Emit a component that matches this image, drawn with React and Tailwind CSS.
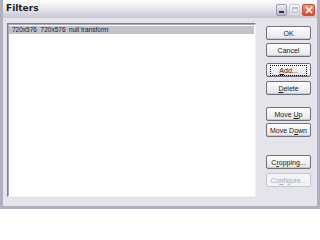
import React from 'react';

const font = { fontFamily: '"Liberation Sans", "DejaVu Sans", sans-serif' };

const Btn = ({ children, disabled, focused, className = '' }) => (
    <div
        className={`h-[14px] w-[45px] rounded-[2px] border flex items-center justify-center text-[7px] leading-none ${
            disabled
                ? 'border-[#c4c4cc] bg-[#f4f4f6] text-[#a8a8b0]'
                : 'border-[#70707c] bg-gradient-to-b from-white to-[#e4e4ea] text-[#202020] shadow-[inset_0_-1px_0_#c8c8d0]'
        } ${className}`}
    >
        {focused ? (
            <span className="border border-dotted border-black px-[8px] py-[1px]">{children}</span>
        ) : (
            <span className="whitespace-pre">{children}</span>
        )}
    </div>
);

const U = ({ children }) => <span className="underline underline-offset-1">{children}</span>;

const TitleBar = () => (
    <div className="h-[18px] shrink-0 flex items-center justify-between pl-[3px] pr-[2px] bg-gradient-to-b from-[#fdfdfe] via-[#e6e6ee] to-[#c6c6d2]">
        <span className="text-[9px] font-bold text-[#202020]" style={{ fontFamily: '"DejaVu Sans", sans-serif' }}>Filters</span>
        <div className="flex items-center gap-[2px] pt-[2px]">
            <div className="w-[11px] h-[12px] rounded-[2px] border border-[#9a9ab0] bg-gradient-to-b from-[#f0f0f6] to-[#b4b4c8] flex items-end justify-center pb-[2px]">
                <div className="w-[5px] h-[2px] bg-[#303040]" />
            </div>
            <div className="w-[11px] h-[12px] rounded-[2px] border border-[#c8c8d6] bg-gradient-to-b from-[#fafafe] to-[#dcdce6] flex items-center justify-center">
                <div className="w-[6px] h-[6px] border border-[#c0c0cc] border-t-2" />
            </div>
            <div className="w-[13px] h-[12px] rounded-[2px] border border-[#c05040] bg-gradient-to-b from-[#f09a80] to-[#d8482c] flex items-center justify-center">
                <svg width="8" height="8" viewBox="0 0 8 8">
                    <path d="M1 1 L7 7 M7 1 L1 7" stroke="white" strokeWidth="1.6" />
                </svg>
            </div>
        </div>
    </div>
);

export default function App() {
    return (
        <div className="w-[320px] h-[209px] flex flex-col bg-[#e4e4ea] border-x-[3px] border-b-[3px] border-[#b0b0c0]" style={font}>
            <TitleBar />
            <div className="flex flex-1 pl-[4px] pt-[5px]">
                <div className="w-[249px] h-[174px] bg-white border border-[#7f7f8c] border-r-[#f0f0f4] border-b-[#f0f0f4] shadow-[inset_1px_1px_0_#a8a8b4]">
                    <div className="mt-[2px] mx-[1px] h-[8px] bg-[#c2c2cc] flex items-center pl-[3px] text-[6.5px] leading-none text-[#202020] whitespace-pre">
                        720x576  720x576  null transform
                    </div>
                </div>
                <div className="ml-[10px] pt-[3px] flex flex-col">
                    <Btn>OK</Btn>
                    <Btn className="mt-[3px]">Cancel</Btn>
                    <Btn focused className="mt-[6px]"><U>A</U>dd...</Btn>
                    <Btn className="mt-[4px]"><U>D</U>elete</Btn>
                    <Btn className="mt-[12px]">Move <U>U</U>p</Btn>
                    <Btn className="mt-[2px]">Move D<U>o</U>wn</Btn>
                    <Btn className="mt-[18px]">C<U>r</U>opping...</Btn>
                    <Btn disabled className="mt-[4px]">Co<U>n</U>figure...</Btn>
                </div>
            </div>
        </div>
    );
}
